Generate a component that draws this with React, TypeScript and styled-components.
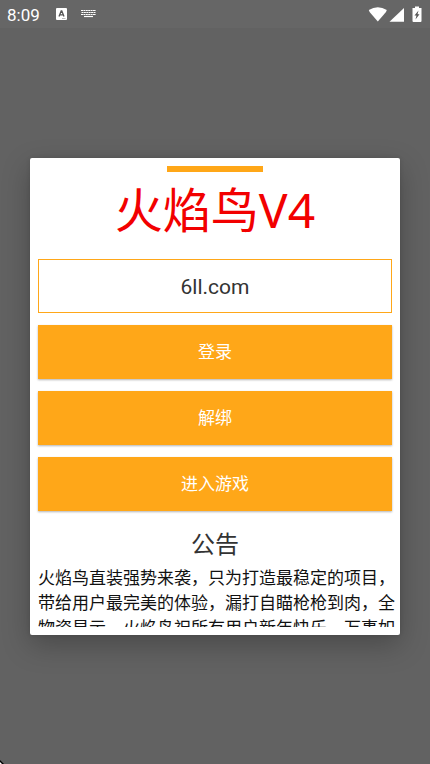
import React from "react";
import styled, { createGlobalStyle } from "styled-components";

const Global = createGlobalStyle`
  *, *::before, *::after { box-sizing: border-box; }
  body {
    margin: 0;
    background: #626262;
    font-family: Roboto, "Noto Sans CJK SC", sans-serif;
  }
`;

const Screen = styled.div`
  position: relative;
  display: flex;
  flex-direction: column;
  min-height: 100vh;
`;

const StatusBar = styled.header`
  display: flex;
  align-items: center;
  height: 28px;
  padding: 0 7px;
  background: #666666;
  color: #ffffff;
`;

const Clock = styled.time`
  font-size: 17px;
  line-height: 28px;
  margin-right: 16px;
  padding-top: 2px;
`;

const Notifications = styled.div`
  display: flex;
  flex: 1;
  align-items: center;
  gap: 14px;
`;

const SystemIcons = styled.div`
  display: flex;
  align-items: center;
`;

const Stage = styled.main`
  display: flex;
  flex: 1;
  align-items: center;
  justify-content: center;
  padding: 0 30px;
`;

const Dialog = styled.section`
  display: flex;
  flex: 1;
  flex-direction: column;
  min-width: 0;
  padding: 8px 0;
  border-radius: 2px;
  background: #ffffff;
  box-shadow: 0 10px 28px rgba(0, 0, 0, 0.25), 0 0 4px rgba(0, 0, 0, 0.12);
`;

const Accent = styled.div`
  align-self: center;
  width: 96px;
  height: 6px;
  background: #ffa718;
`;

const Title = styled.h1`
  margin: 0;
  padding: 6px 0 17px;
  color: #f20000;
  font-family: "Noto Sans", "Noto Sans CJK SC", sans-serif;
  font-size: 48px;
  font-weight: 400;
  line-height: 64px;
  text-align: center;
`;

const Form = styled.form`
  display: flex;
  flex-direction: column;
  gap: 12px;
  padding: 0 8px;
`;

const KeyInput = styled.input`
  width: 100%;
  height: 54px;
  padding: 2px 8px 0;
  border: 1px solid #ffa718;
  border-radius: 0;
  outline: none;
  background: #ffffff;
  color: #333333;
  font-family: inherit;
  font-size: 21px;
  text-align: center;
`;

const ActionButton = styled.button`
  height: 54px;
  padding: 0;
  border: 0;
  background: #ffa718;
  box-shadow: 0 1px 2px rgba(0, 0, 0, 0.3);
  color: #ffffff;
  font-family: inherit;
  font-size: 17px;
  line-height: 54px;
`;

const NoticeTitle = styled.h2`
  margin: 0;
  padding-top: 16px;
  color: #333333;
  font-size: 24px;
  font-weight: 400;
  line-height: 36px;
  text-align: center;
`;

const Notice = styled.div`
  max-height: 64px;
  padding: 3px 5px 0 8px;
  overflow: hidden;
`;

const NoticeText = styled.p`
  margin: 0;
  color: #111111;
  font-size: 17px;
  line-height: 25px;
`;

const Corner = styled.svg`
  position: absolute;
  bottom: 0;
  left: 0;
`;

const LetterIcon = () => (
  <svg width="11" height="12" viewBox="0 0 11 12" aria-hidden="true">
    <rect width="11" height="12" rx="1" fill="#fff" />
    <path d="M3 8.500 5.200 3h.6L8 8.500M3.800 6.800h3.400" fill="none" stroke="#555" strokeWidth="1.3" />
    <path d="M6 10.5h3.5" stroke="#bbb" strokeWidth="1" />
  </svg>
);

const KeyboardIcon = () => (
  <svg width="15" height="8" viewBox="0 0 15 8" aria-hidden="true">
    <g stroke="#fff" strokeWidth="1" fill="none">
      <path d="M0 .5h15" strokeDasharray="2 .4" />
      <path d="M.5 2.500h14" strokeDasharray="2 .4" />
      <path d="M0 4.500h15" strokeDasharray="2 .4" />
      <path d="M3 6.500h9" strokeWidth="1.200" />
    </g>
  </svg>
);

const SignalIcons = () => (
  <svg width="55" height="18" viewBox="0 0 55 18" fill="#fff" aria-hidden="true">
    <path d="M0.800 5Q9.800 -.5 18.800 5L18 7 9.800 16.500 1.600 7z" />
    <path d="M36 3V16.800H21.500z" />
    <path d="M47 1.500h4v1.500h2.500V16a1 1 0 0 1-1 1h-7a1 1 0 0 1-1-1V3H47z" />
    <path d="m50.500 5.500-4 5h2l-1 4 4-5.200h-2z" fill="#555" />
  </svg>
);

const actions = ["登录", "解绑", "进入游戏"];

export default function App() {
  return (
    <>
      <Global />
      <Screen>
        <StatusBar>
          <Clock>8:09</Clock>
          <Notifications>
            <LetterIcon />
            <KeyboardIcon />
          </Notifications>
          <SystemIcons>
            <SignalIcons />
          </SystemIcons>
        </StatusBar>
        <Stage>
          <Dialog>
            <Accent />
            <Title>火焰鸟V4</Title>
            <Form onSubmit={(event) => event.preventDefault()}>
              <KeyInput type="text" aria-label="卡密" defaultValue="6ll.com" />
              {actions.map((label) => (
                <ActionButton key={label} type="button">
                  {label}
                </ActionButton>
              ))}
            </Form>
            <NoticeTitle>公告</NoticeTitle>
            <Notice>
              <NoticeText>
                火焰鸟直装强势来袭，只为打造最稳定的项目，带给用户最完美的体验，漏打自瞄枪枪到肉，全物资显示，火焰鸟祝所有用户新年快乐，万事如
              </NoticeText>
            </Notice>
          </Dialog>
        </Stage>
        <Corner width="4" height="4" viewBox="0 0 4 4" aria-hidden="true">
          <path d="M0 0 4 4H0z" fill="#000" />
          <path d="M0 2 2 4H0z" fill="#fff" />
        </Corner>
      </Screen>
    </>
  );
}
